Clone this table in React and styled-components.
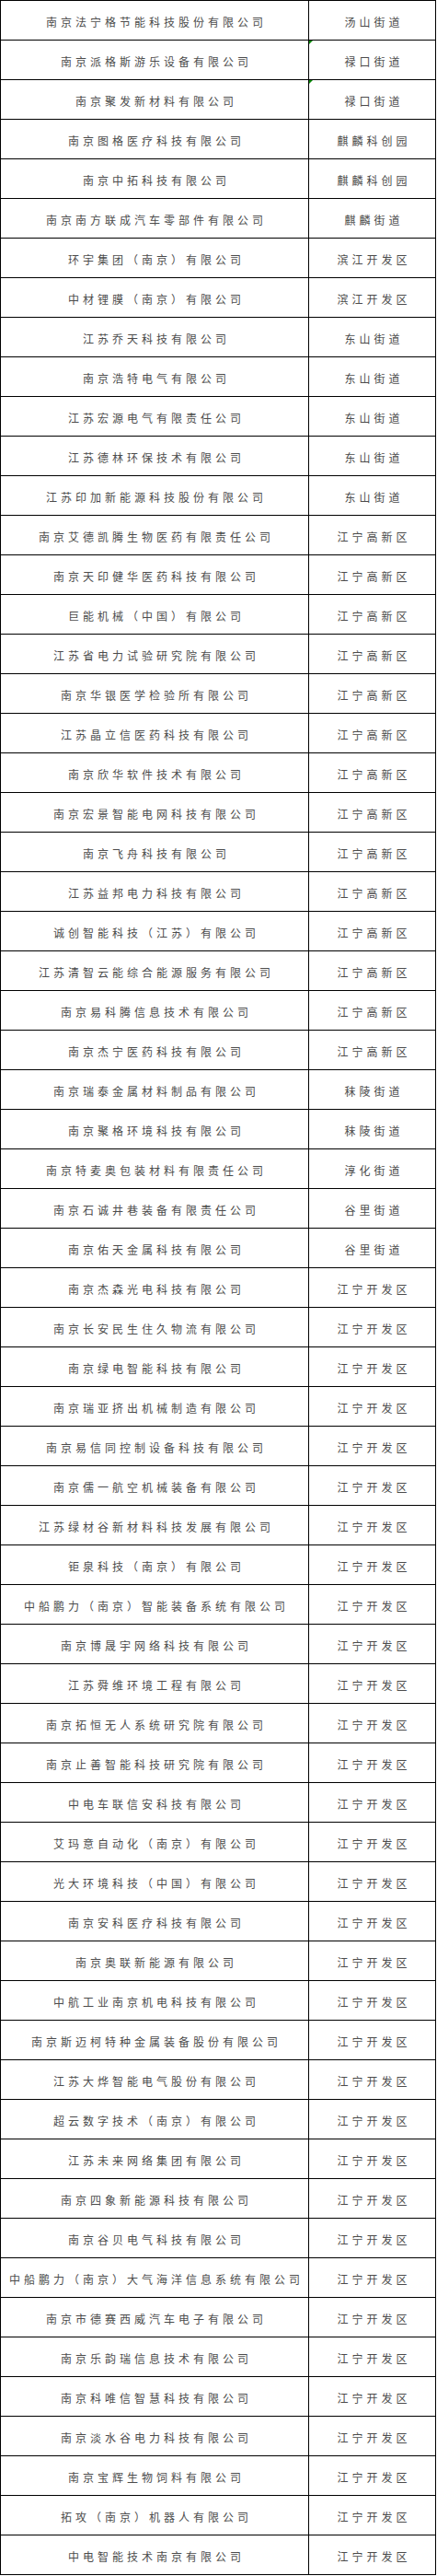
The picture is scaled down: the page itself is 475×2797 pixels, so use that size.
import styled, { createGlobalStyle } from 'styled-components';

const rows = [
	['南京法宁格节能科技股份有限公司', '汤山街道'],
	['南京派格斯游乐设备有限公司', '禄口街道', true],
	['南京聚发新材料有限公司', '禄口街道', true],
	['南京图格医疗科技有限公司', '麒麟科创园'],
	['南京中拓科技有限公司', '麒麟科创园'],
	['南京南方联成汽车零部件有限公司', '麒麟街道'],
	['环宇集团（南京）有限公司', '滨江开发区'],
	['中材锂膜（南京）有限公司', '滨江开发区'],
	['江苏乔天科技有限公司', '东山街道'],
	['南京浩特电气有限公司', '东山街道'],
	['江苏宏源电气有限责任公司', '东山街道'],
	['江苏德林环保技术有限公司', '东山街道'],
	['江苏印加新能源科技股份有限公司', '东山街道'],
	['南京艾德凯腾生物医药有限责任公司', '江宁高新区'],
	['南京天印健华医药科技有限公司', '江宁高新区'],
	['巨能机械（中国）有限公司', '江宁高新区'],
	['江苏省电力试验研究院有限公司', '江宁高新区'],
	['南京华银医学检验所有限公司', '江宁高新区'],
	['江苏晶立信医药科技有限公司', '江宁高新区'],
	['南京欣华软件技术有限公司', '江宁高新区'],
	['南京宏景智能电网科技有限公司', '江宁高新区'],
	['南京飞舟科技有限公司', '江宁高新区'],
	['江苏益邦电力科技有限公司', '江宁高新区'],
	['诚创智能科技（江苏）有限公司', '江宁高新区'],
	['江苏清智云能综合能源服务有限公司', '江宁高新区'],
	['南京易科腾信息技术有限公司', '江宁高新区'],
	['南京杰宁医药科技有限公司', '江宁高新区'],
	['南京瑞泰金属材料制品有限公司', '秣陵街道'],
	['南京聚格环境科技有限公司', '秣陵街道'],
	['南京特麦奥包装材料有限责任公司', '淳化街道'],
	['南京石诚井巷装备有限责任公司', '谷里街道'],
	['南京佑天金属科技有限公司', '谷里街道'],
	['南京杰森光电科技有限公司', '江宁开发区'],
	['南京长安民生住久物流有限公司', '江宁开发区'],
	['南京绿电智能科技有限公司', '江宁开发区'],
	['南京瑞亚挤出机械制造有限公司', '江宁开发区'],
	['南京易信同控制设备科技有限公司', '江宁开发区'],
	['南京儒一航空机械装备有限公司', '江宁开发区'],
	['江苏绿材谷新材料科技发展有限公司', '江宁开发区'],
	['钜泉科技（南京）有限公司', '江宁开发区'],
	['中船鹏力（南京）智能装备系统有限公司', '江宁开发区'],
	['南京博晟宇网络科技有限公司', '江宁开发区'],
	['江苏舜维环境工程有限公司', '江宁开发区'],
	['南京拓恒无人系统研究院有限公司', '江宁开发区'],
	['南京止善智能科技研究院有限公司', '江宁开发区'],
	['中电车联信安科技有限公司', '江宁开发区'],
	['艾玛意自动化（南京）有限公司', '江宁开发区'],
	['光大环境科技（中国）有限公司', '江宁开发区'],
	['南京安科医疗科技有限公司', '江宁开发区'],
	['南京奥联新能源有限公司', '江宁开发区'],
	['中航工业南京机电科技有限公司', '江宁开发区'],
	['南京斯迈柯特种金属装备股份有限公司', '江宁开发区'],
	['江苏大烨智能电气股份有限公司', '江宁开发区'],
	['超云数字技术（南京）有限公司', '江宁开发区'],
	['江苏未来网络集团有限公司', '江宁开发区'],
	['南京四象新能源科技有限公司', '江宁开发区'],
	['南京谷贝电气科技有限公司', '江宁开发区'],
	['中船鹏力（南京）大气海洋信息系统有限公司', '江宁开发区'],
	['南京市德赛西威汽车电子有限公司', '江宁开发区'],
	['南京乐韵瑞信息技术有限公司', '江宁开发区'],
	['南京科唯信智慧科技有限公司', '江宁开发区'],
	['南京淡水谷电力科技有限公司', '江宁开发区'],
	['南京宝辉生物饲料有限公司', '江宁开发区'],
	['拓攻（南京）机器人有限公司', '江宁开发区'],
	['中电智能技术南京有限公司', '江宁开发区'],
];

const App = () => {
	return (
		<>
			<GlobalStyle />
			<Sheet>
				{rows.map(([name, area, marked]) => (
					<Row key={name}>
						<Cell>{name}</Cell>
						<Cell $marked={marked}>{area}</Cell>
					</Row>
				))}
			</Sheet>
		</>
	)
}

export default App;

const GlobalStyle = createGlobalStyle`
	body {
		margin: 0;
		background: #FFFFFF;
		font-family: "Noto Sans CJK SC", "Noto Sans", sans-serif;
	}
`

const Sheet = styled.div`
	width: 474px;
	box-sizing: border-box;
	border-top: 1px solid #000000;
	border-left: 1px solid #000000;
`

const Row = styled.div`
	display: grid;
	grid-template-columns: 335px 138px;
`

const Cell = styled.div`
	position: relative;
	box-sizing: border-box;
	height: 43px;
	padding: 2px 0 0 4px;
	display: flex;
	align-items: center;
	justify-content: center;
	border-right: 1px solid #000000;
	border-bottom: 1px solid #000000;
	font-size: 12px;
	letter-spacing: 4px;
	color: #4c4c4c;
	white-space: nowrap;

	${p => p.$marked && `
		&::before {
			content: '';
			position: absolute;
			top: 0;
			left: 0;
			border-top: 4px solid #0A8A0A;
			border-right: 4px solid transparent;
		}
	`}
`
